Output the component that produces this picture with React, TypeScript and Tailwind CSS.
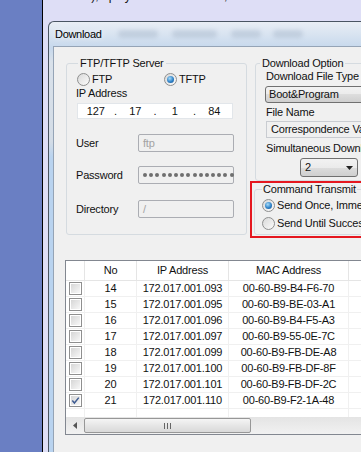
import React from "react";

type Row = { no: number; ip: string; mac: string; checked?: boolean };

const ROWS: Row[] = [
  { no: 14, ip: "172.017.001.093", mac: "00-60-B9-B4-F6-70" },
  { no: 15, ip: "172.017.001.095", mac: "00-60-B9-BE-03-A1" },
  { no: 16, ip: "172.017.001.096", mac: "00-60-B9-B4-F5-A3" },
  { no: 17, ip: "172.017.001.097", mac: "00-60-B9-55-0E-7C" },
  { no: 18, ip: "172.017.001.099", mac: "00-60-B9-FB-DE-A8" },
  { no: 19, ip: "172.017.001.100", mac: "00-60-B9-FB-DF-8F" },
  { no: 20, ip: "172.017.001.101", mac: "00-60-B9-FB-DF-2C" },
  { no: 21, ip: "172.017.001.110", mac: "00-60-B9-F2-1A-48", checked: true },
];

function Radio({ checked }: { checked?: boolean }) {
  return (
    <span className="flex h-[13px] w-[13px] shrink-0 items-center justify-center rounded-full border border-[#8e8f8f] bg-[linear-gradient(135deg,#d9d9d9,#fbfbfb)]">
      {checked && (
        <span className="h-[7px] w-[7px] rounded-full bg-[radial-gradient(circle_at_40%_35%,#a8dcf8,#2f82c8_55%,#1a4f88)]" />
      )}
    </span>
  );
}

function Check({ checked }: { checked?: boolean }) {
  return (
    <span className="flex h-[13px] w-[13px] items-center justify-center border border-[#8f8f8f] bg-white p-px">
      <span className="flex h-full w-full items-center justify-center bg-[linear-gradient(135deg,#d6d6d6,#f7f7f7)]">
        {checked && (
          <svg viewBox="0 0 9 9" className="h-[9px] w-[9px]">
            <path d="M1.3 4.6 L3.4 7 L7.8 1.6" stroke="#3f5c92" strokeWidth="1.5" fill="none" />
          </svg>
        )}
      </span>
    </span>
  );
}

function Field({ label, children }: { label: string; children: React.ReactNode }) {
  return (
    <div className="flex h-[18px] items-center">
      <span className="w-[62px]">{label}</span>
      <div className="flex h-[18px] w-[96px] items-center rounded-[2px] border border-[#abadb3] bg-[#f0f0f0] px-[4px] text-[#a3a3a3]">
        {children}
      </div>
    </div>
  );
}

export default function App() {
  return (
    <div className="flex h-[452px] w-[361px] overflow-hidden bg-[#dedef6] font-['Liberation_Sans',Arial,sans-serif] text-[11px] tracking-[-0.2px] text-[#111]">
      <div className="w-[42px] shrink-0 bg-[#6a7fc3]" />
      <div className="w-px shrink-0 bg-black" />

      <div className="flex min-w-0 flex-1 flex-col">
        <div className="h-[21px] shrink-0 overflow-hidden pl-[5px]">
          <div className="-mt-[11px] whitespace-nowrap text-[12px] leading-[14px] tracking-normal">
            Solution), I played with them also, but the error remains
          </div>
        </div>

        {/* window */}
        <div className="ml-[5px] flex flex-1 flex-col rounded-tl-[6px] border-l border-t border-[#4a5563] bg-[linear-gradient(to_bottom,#e9eef5_0px,#c6d8ec_26px,#d9e1ea_40px,#d3dce6_120px,#b9d3ef_135px,#b9d3ef)]">
          <div className="flex h-[24px] shrink-0 items-center pl-[6px]">
            <span className="text-[11px] tracking-[-0.3px] text-black [text-shadow:0_0_6px_#fff]">Download</span>
            <span className="ml-[16px] h-[8px] w-[40px] rounded-full bg-[#9fb0c4] opacity-40 blur-[2px]" />
            <span className="ml-[14px] h-[8px] w-[45px] rounded-full bg-[#9fb0c4] opacity-40 blur-[2px]" />
            <span className="ml-[14px] h-[8px] w-[30px] rounded-full bg-[#9fb0c4] opacity-40 blur-[2px]" />
            <span className="ml-[12px] h-[8px] w-[30px] rounded-full bg-[#9fb0c4] opacity-40 blur-[2px]" />
          </div>

          <div className="flex flex-1">
            <div className="w-[4px] shrink-0" />
            <div className="flex flex-1 flex-col border-l border-t border-[#95a4b6] bg-[#f0f0f0]">
              <div className="mt-[10px] flex items-start">
                {/* FTP/TFTP Server */}
                <fieldset className="ml-[12px] w-[181px] shrink-0 rounded-[3px] border border-[#d5dbe0]">
                  <legend className="ml-[11px] px-[2px] leading-[13px]">FTP/TFTP Server</legend>
                  <div className="pb-[16px] pl-[9px]">
                    <div className="mt-[3px] flex h-[13px] items-center">
                      <div className="ml-[1px] flex w-[87px] items-center gap-[2px]">
                        <Radio />
                        <span>FTP</span>
                      </div>
                      <div className="flex items-center gap-[2px]">
                        <Radio checked />
                        <span>TFTP</span>
                      </div>
                    </div>
                    <div className="mt-px leading-[13px]">IP Address</div>
                    <div className="ml-px mt-[3px] flex h-[16px] w-[156px] items-center border border-[#e2e6ea] bg-white">
                      <span className="flex-1 text-center">127</span>
                      <span className="w-[4px] text-center">.</span>
                      <span className="flex-1 text-center">17</span>
                      <span className="w-[4px] text-center">.</span>
                      <span className="flex-1 text-center">1</span>
                      <span className="w-[4px] text-center">.</span>
                      <span className="flex-1 text-center">84</span>
                    </div>
                    <div className="mt-[15px]">
                      <Field label="User">ftp</Field>
                    </div>
                    <div className="mt-[14px]">
                      <Field label="Password">
                        <div className="flex gap-[2.2px]">
                          {Array.from({ length: 15 }).map((_, i) => (
                            <span key={i} className="h-[4px] w-[4px] rounded-full bg-[#6f6f6f]" />
                          ))}
                        </div>
                      </Field>
                    </div>
                    <div className="mt-[16px]">
                      <Field label="Directory">/</Field>
                    </div>
                  </div>
                </fieldset>

                {/* right column */}
                <div className="ml-[8px] w-[135px] shrink-0 whitespace-nowrap">
                  <fieldset className="rounded-[3px] border border-[#d5dbe0]">
                    <legend className="ml-[4px] px-[2px] leading-[13px]">Download Option</legend>
                    <div className="pb-[3px] pl-[10px]">
                      <div className="leading-[13px]">Download File Type</div>
                      <div className="-ml-px mt-[3px] flex h-[17px] w-[115px] items-center rounded-[3px] border border-[#707070] bg-[linear-gradient(to_bottom,#f2f2f2,#ebebeb_50%,#dddddd_50%,#cfcfcf)] pl-[3px]">
                        Boot&amp;Program
                      </div>
                      <div className="mt-[3px] leading-[13px]">File Name</div>
                      <div className="mt-[2px] flex h-[17px] w-[115px] items-center border border-[#c9ccd1] bg-[#f0f0f0] pl-[4px]">
                        Correspondence Value
                      </div>
                      <div className="mt-[4px] leading-[13px]">Simultaneous Download</div>
                      <div className="ml-[34px] mt-[3px] flex h-[19px] w-[58px] items-center justify-between rounded-[3px] border border-[#707070] bg-[linear-gradient(to_bottom,#f2f2f2,#ebebeb_50%,#dddddd_50%,#cfcfcf)] pl-[4px] pr-[4px]">
                        <span>2</span>
                        <svg viewBox="0 0 7 4" className="h-[4px] w-[7px]">
                          <path d="M0 0 H7 L3.5 4 Z" fill="#222" />
                        </svg>
                      </div>
                    </div>
                  </fieldset>

                  <div className="-ml-[5px] h-[57px] w-[140px] border-2 border-[#e5171f]">
                    <fieldset className="ml-[2px] rounded-[3px] border border-[#d5dbe0]">
                      <legend className="ml-[7px] px-px leading-[13px]">Command Transmit</legend>
                      <div className="pb-[4px] pl-[7px]">
                        <div className="mt-[3px] flex h-[13px] items-center gap-[2px]">
                          <Radio checked />
                          <span>Send Once, Immediately</span>
                        </div>
                        <div className="mt-[5px] flex h-[13px] items-center gap-[2px]">
                          <Radio />
                          <span>Send Until Success</span>
                        </div>
                      </div>
                    </fieldset>
                  </div>
                </div>
              </div>

              {/* device list */}
              <div className="ml-[11px] mt-[22px] flex w-[320px] flex-col border border-[#828790] bg-white">
                <div className="flex h-[20px] border-b border-[#e5e5e5]">
                  <div className="w-[19px] border-r border-[#e5e5e5]" />
                  <div className="flex w-[52px] items-center justify-center border-r border-[#e5e5e5]">No</div>
                  <div className="flex w-[92px] items-center justify-center border-r border-[#e5e5e5]">IP Address</div>
                  <div className="flex w-[120px] items-center justify-center border-r border-[#e5e5e5]">MAC Address</div>
                  <div className="flex-1" />
                </div>
                {ROWS.map((r) => (
                  <div key={r.no} className="flex h-[16px] border-b border-[#f0f0f0]">
                    <div className="flex w-[19px] items-center justify-center border-r border-[#f0f0f0]">
                      <Check checked={r.checked} />
                    </div>
                    <div className="flex w-[52px] items-center justify-center border-r border-[#f0f0f0]">{r.no}</div>
                    <div className="flex w-[92px] items-center justify-center border-r border-[#f0f0f0]">{r.ip}</div>
                    <div className="flex w-[120px] items-center justify-center border-r border-[#f0f0f0]">{r.mac}</div>
                    <div className="flex-1" />
                  </div>
                ))}
                <div className="flex h-[8px]">
                  <div className="w-[19px] border-r border-[#f0f0f0]" />
                  <div className="w-[52px] border-r border-[#f0f0f0]" />
                  <div className="w-[92px] border-r border-[#f0f0f0]" />
                  <div className="w-[120px] border-r border-[#f0f0f0]" />
                </div>
                <div className="flex h-[17px] items-center bg-[linear-gradient(to_bottom,#e4e4e4,#f1f1f1)]">
                  <div className="flex w-[17px] items-center justify-center">
                    <svg viewBox="0 0 4 7" className="h-[7px] w-[4px]">
                      <path d="M4 0 V7 L0 3.5 Z" fill="#555" />
                    </svg>
                  </div>
                  <div className="ml-px flex h-[15px] w-[167px] items-center justify-center gap-[2px] rounded-[2px] border border-[#979797] bg-[linear-gradient(to_bottom,#f5f5f5,#e6e6e6_50%,#d9d9d9)]">
                    <span className="h-[6px] w-px bg-[#666]" />
                    <span className="h-[6px] w-px bg-[#666]" />
                    <span className="h-[6px] w-px bg-[#666]" />
                  </div>
                </div>
              </div>
            </div>
          </div>
        </div>
      </div>
    </div>
  );
}
